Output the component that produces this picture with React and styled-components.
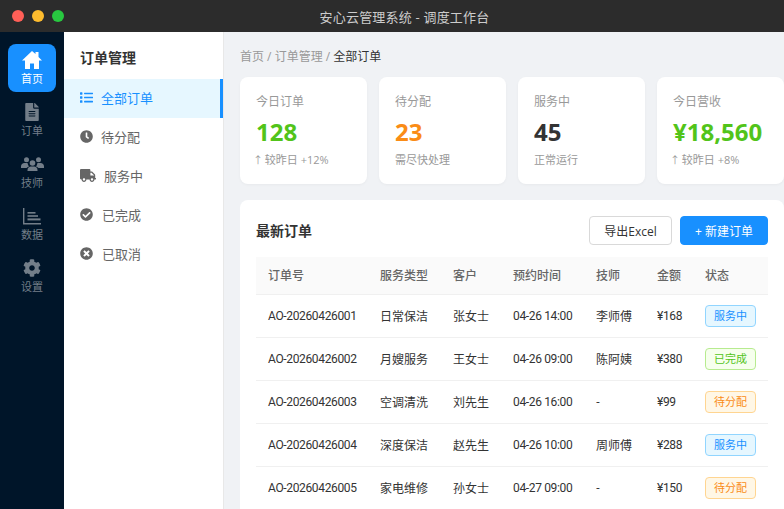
import React from "react";
import styled, { createGlobalStyle } from "styled-components";
import {
  FaFileAlt,
  FaCog,
  FaList,
  FaClock,
  FaTruck,
  FaCheckCircle,
  FaTimesCircle,
} from "react-icons/fa";

const GlobalStyle = createGlobalStyle`
  html, body {
    margin: 0;
    padding: 0;
    height: 100%;
    overflow: hidden;
    background: #f0f2f5;
    font-family: "Open Sans", "Noto Sans CJK SC", sans-serif;
  }
  * { box-sizing: border-box; }
`;

const Window = styled.div`
  width: 784px;
  height: 509px;
  display: flex;
  flex-direction: column;
  overflow: hidden;
`;

const TitleBar = styled.div`
  height: 32px;
  flex: none;
  background: #2c2c2c;
  display: flex;
  align-items: center;
  position: relative;
  padding-left: 12px;
  gap: 8px;
`;

const Dot = styled.span`
  width: 12px;
  height: 12px;
  border-radius: 50%;
  background: ${(p) => p.$color};
`;

const WindowTitle = styled.div`
  position: absolute;
  left: 25px;
  right: 0;
  text-align: center;
  color: #ccc;
  font-size: 13px;
  letter-spacing: 0.2px;
`;

const Body = styled.div`
  flex: 1;
  display: flex;
  min-height: 0;
`;

const Rail = styled.nav`
  width: 64px;
  flex: none;
  background: #001529;
  padding: 12px 8px 0;
  display: flex;
  flex-direction: column;
  gap: 4px;
`;

const RailItem = styled.div`
  height: 48px;
  border-radius: 8px;
  display: flex;
  flex-direction: column;
  align-items: center;
  justify-content: center;
  gap: 2px;
  background: ${(p) => (p.$active ? "#1890ff" : "transparent")};
  color: ${(p) => (p.$active ? "#fff" : "rgba(255,255,255,0.45)")};
  font-size: 11px;
  line-height: 14px;
`;

const RailIcon = styled.span`
  height: 20px;
  display: flex;
  align-items: center;
  justify-content: center;
  font-size: 18px;
`;

const SubMenu = styled.aside`
  width: 160px;
  flex: none;
  background: #fff;
  border-right: 1px solid #e8e8e8;
`;

const SubTitle = styled.div`
  height: 47px;
  padding: 16px 16px 0;
  font-size: 14px;
  font-weight: 600;
  line-height: 20px;
  color: #333;
`;

const SubItem = styled.div`
  height: 39px;
  display: flex;
  align-items: center;
  gap: ${(p) => p.$gap}px;
  padding: 0 0 2px 16px;
  font-size: 13px;
  color: ${(p) => (p.$active ? "#1890ff" : "#666")};
  background: ${(p) => (p.$active ? "#e6f7ff" : "transparent")};
  border-right: 3px solid ${(p) => (p.$active ? "#1890ff" : "transparent")};
  svg {
    width: ${(p) => p.$iconWidth}px;
    height: 13px;
    flex: none;
  }
`;

const Content = styled.main`
  flex: 1;
  min-width: 0;
  padding: 16px 0 0 16px;
`;

const Crumbs = styled.div`
  font-size: 12px;
  line-height: 18px;
  color: #999;
  margin-bottom: 11px;
`;

const CrumbNow = styled.span`
  color: #333;
`;

const Stats = styled.div`
  display: grid;
  grid-template-columns: repeat(4, 1fr);
  gap: 12px;
  margin-bottom: 16px;
`;

const StatCard = styled.div`
  height: 107px;
  background: #fff;
  border-radius: 8px;
  padding: 16px;
  box-shadow: 0 1px 3px rgba(0, 0, 0, 0.04);
`;

const StatLabel = styled.div`
  font-size: 12px;
  line-height: 18px;
  color: #999;
`;

const StatValue = styled.div`
  font-size: 24px;
  font-weight: 700;
  line-height: 32px;
  margin-top: 5px;
  color: ${(p) => p.$color};
`;

const StatNote = styled.div`
  font-size: 11px;
  line-height: 16px;
  margin-top: 4px;
  color: #999;
`;

const Arrow = styled.span`
  display: inline-block;
  width: 5px;
  font-size: 10px;
  text-indent: -3px;
  margin-right: 1px;
`;

const Panel = styled.section`
  background: #fff;
  border-radius: 8px;
  padding: 16px;
  height: 400px;
`;

const PanelHead = styled.div`
  display: flex;
  align-items: center;
  justify-content: space-between;
  margin-bottom: 12px;
`;

const PanelTitle = styled.h2`
  margin: 0;
  padding-bottom: 2px;
  font-size: 14px;
  font-weight: 600;
  color: #333;
`;

const Actions = styled.div`
  display: flex;
  gap: 8px;
`;

const Button = styled.button`
  height: 29px;
  width: ${(p) => p.$width}px;
  padding: 0;
  border-radius: 4px;
  font: inherit;
  font-size: 12px;
  border: 1px solid ${(p) => (p.$primary ? "#1890ff" : "#d9d9d9")};
  background: ${(p) => (p.$primary ? "#1890ff" : "#fff")};
  color: ${(p) => (p.$primary ? "#fff" : "#333")};
`;

const Table = styled.table`
  width: 512px;
  table-layout: fixed;
  border-collapse: collapse;
  font-size: 12px;
`;

const Th = styled.th`
  height: 37px;
  padding: 0 12px 1px;
  text-align: left;
  font-weight: 500;
  color: #666;
  background: #fafafa;
  border-bottom: 1px solid #f0f0f0;
`;

const Td = styled.td`
  height: 43px;
  padding: 0 12px;
  color: #333;
  white-space: nowrap;
  border-bottom: 1px solid #f0f0f0;
`;

// codes, times and prices run narrower than the cjk cells
const Figure = styled.span`
  font-family: Roboto, sans-serif;
  letter-spacing: -0.35px;
`;

const tagColors = {
  服务中: ["#e6f7ff", "#91d5ff", "#1890ff"],
  已完成: ["#f6ffed", "#b7eb8f", "#52c41a"],
  待分配: ["#fff7e6", "#ffd591", "#fa8c16"],
};

const Tag = styled.span`
  display: inline-block;
  width: 51px;
  height: 22px;
  line-height: 20px;
  text-align: center;
  border-radius: 4px;
  font-size: 11px;
  vertical-align: middle;
  background: ${(p) => tagColors[p.$status][0]};
  border: 1px solid ${(p) => tagColors[p.$status][1]};
  color: ${(p) => tagColors[p.$status][2]};
`;

const HomeIcon = () => (
  <svg width="20" height="18" viewBox="0 0 20 18" fill="currentColor">
    <path d="M10 0L13.5 3V1H16.5V6L20 9.5H17V18H12V12.5H8V18H3V9.5H0Z" />
  </svg>
);

const TeamIcon = () => (
  <svg width="23" height="14" viewBox="0 0 23 14" fill="currentColor">
    <circle cx="5.5" cy="2.7" r="2.5" />
    <circle cx="17.5" cy="2.7" r="2.5" />
    <circle cx="11.5" cy="6" r="2.8" />
    <path d="M0 11V9.5C0 7.5 1.5 6 3.5 6H6.5C7 8 7.5 9 8 9.5C6.5 10 6 10.5 5.5 11Z" />
    <path d="M23 11V9.5C23 7.5 21.5 6 19.5 6H16.5C16 8 15.5 9 15 9.5C16.5 10 17 10.5 17.5 11Z" />
    <path d="M6.5 14V13C6.5 11 8 9.6 10 9.6H13C15 9.6 16.5 11 16.5 13V14Z" />
  </svg>
);

const ChartIcon = () => (
  <svg width="18" height="17" viewBox="0 0 18 17" fill="currentColor">
    <path d="M0 0H1.4V15H18V16.4H0Z" />
    <rect x="4.5" y="4" width="8" height="1.6" />
    <rect x="4.5" y="7.2" width="10.5" height="1.6" />
    <rect x="4.5" y="10.4" width="13" height="2" />
  </svg>
);

const railItems = [
  { label: "首页", Icon: HomeIcon, active: true },
  { label: "订单", Icon: FaFileAlt },
  { label: "技师", Icon: TeamIcon },
  { label: "数据", Icon: ChartIcon },
  { label: "设置", Icon: FaCog },
];

const subItems = [
  { label: "全部订单", Icon: FaList, active: true, gap: 8, iconWidth: 13 },
  { label: "待分配", Icon: FaClock, gap: 8, iconWidth: 13 },
  { label: "服务中", Icon: FaTruck, gap: 8, iconWidth: 16 },
  { label: "已完成", Icon: FaCheckCircle, gap: 9, iconWidth: 13 },
  { label: "已取消", Icon: FaTimesCircle, gap: 9, iconWidth: 13 },
];

const stats = [
  { label: "今日订单", value: "128", color: "#52c41a", rise: true, note: "较昨日 +12%" },
  { label: "待分配", value: "23", color: "#fa8c16", note: "需尽快处理" },
  { label: "服务中", value: "45", color: "#333", note: "正常运行" },
  { label: "今日营收", value: "¥18,560", color: "#52c41a", rise: true, note: "较昨日 +8%" },
];

const columns = [
  ["订单号", 112],
  ["服务类型", 73],
  ["客户", 60],
  ["预约时间", 83],
  ["技师", 61],
  ["金额", 48],
  ["状态", 75],
];

const orders = [
  ["AO-20260426001", "日常保洁", "张女士", "04-26 14:00", "李师傅", "¥168", "服务中"],
  ["AO-20260426002", "月嫂服务", "王女士", "04-26 09:00", "陈阿姨", "¥380", "已完成"],
  ["AO-20260426003", "空调清洗", "刘先生", "04-26 16:00", "-", "¥99", "待分配"],
  ["AO-20260426004", "深度保洁", "赵先生", "04-26 10:00", "周师傅", "¥288", "服务中"],
  ["AO-20260426005", "家电维修", "孙女士", "04-27 09:00", "-", "¥150", "待分配"],
];

export default function App() {
  return (
    <Window>
      <GlobalStyle />
      <TitleBar>
        <Dot $color="#ff5f57" />
        <Dot $color="#febc2e" />
        <Dot $color="#28c840" />
        <WindowTitle>安心云管理系统 - 调度工作台</WindowTitle>
      </TitleBar>
      <Body>
        <Rail>
          {railItems.map(({ label, Icon, active }) => (
            <RailItem key={label} $active={active}>
              <RailIcon>
                <Icon />
              </RailIcon>
              {label}
            </RailItem>
          ))}
        </Rail>
        <SubMenu>
          <SubTitle>订单管理</SubTitle>
          {subItems.map(({ label, Icon, active, gap, iconWidth }) => (
            <SubItem key={label} $active={active} $gap={gap} $iconWidth={iconWidth}>
              <Icon />
              {label}
            </SubItem>
          ))}
        </SubMenu>
        <Content>
          <Crumbs>
            首页 / 订单管理 / <CrumbNow>全部订单</CrumbNow>
          </Crumbs>
          <Stats>
            {stats.map((s) => (
              <StatCard key={s.label}>
                <StatLabel>{s.label}</StatLabel>
                <StatValue $color={s.color}>{s.value}</StatValue>
                <StatNote>
                  {s.rise && <Arrow>↑</Arrow>} {s.note}
                </StatNote>
              </StatCard>
            ))}
          </Stats>
          <Panel>
            <PanelHead>
              <PanelTitle>最新订单</PanelTitle>
              <Actions>
                <Button $width={83}>导出Excel</Button>
                <Button $primary $width={88}>+ 新建订单</Button>
              </Actions>
            </PanelHead>
            <Table>
              <colgroup>
                {columns.map(([name, width]) => (
                  <col key={name} width={width} />
                ))}
              </colgroup>
              <thead>
                <tr>
                  {columns.map(([name]) => (
                    <Th key={name}>{name}</Th>
                  ))}
                </tr>
              </thead>
              <tbody>
                {orders.map((row) => (
                  <tr key={row[0]}>
                    <Td><Figure>{row[0]}</Figure></Td>
                    <Td>{row[1]}</Td>
                    <Td>{row[2]}</Td>
                    <Td><Figure>{row[3]}</Figure></Td>
                    <Td>{row[4]}</Td>
                    <Td><Figure>{row[5]}</Figure></Td>
                    <Td>
                      <Tag $status={row[6]}>{row[6]}</Tag>
                    </Td>
                  </tr>
                ))}
              </tbody>
            </Table>
          </Panel>
        </Content>
      </Body>
    </Window>
  );
}
